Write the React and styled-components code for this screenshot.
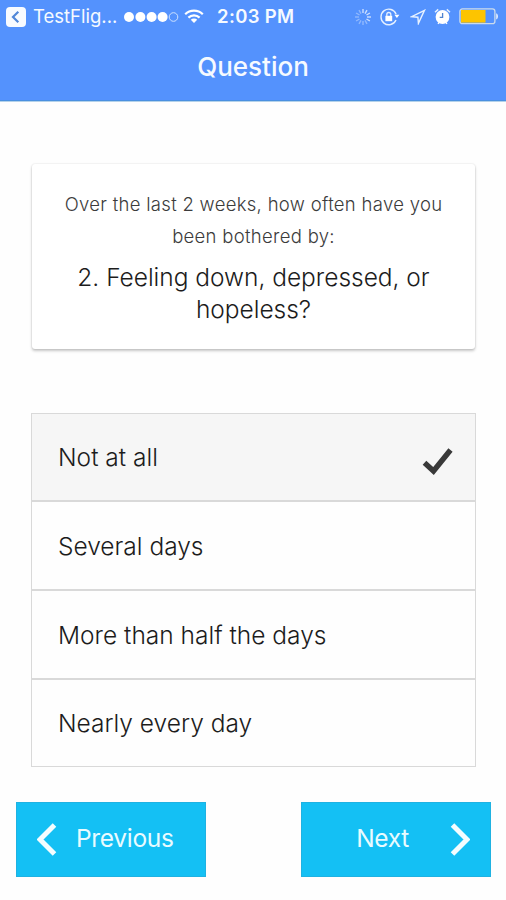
import React, { useState } from "react";
import styled, { createGlobalStyle } from "styled-components";

const GlobalStyle = createGlobalStyle`
  * { box-sizing: border-box; }
  body {
    margin: 0;
    background: #fefefe;
    font-family: Inter, "Liberation Sans", sans-serif;
  }
  button { font-family: inherit; }
`;

const Screen = styled.div`
  width: 506px;
  height: 900px;
  overflow: hidden;
  display: flex;
  flex-direction: column;
`;

const Header = styled.header`
  height: 102px;
  flex: none;
  background: #5492fd;
  border-bottom: 1px solid #b4d2ea;
  box-shadow: inset 0 -1px 0 #4a90e0;
  color: #f6faff;
`;

const StatusBar = styled.div`
  display: flex;
  align-items: center;
  height: 33px;
  padding-left: 6px;
`;

const StatusItem = styled.div`
  flex: none;
  width: ${(p) => p.$width}px;
  margin-right: ${(p) => p.$gap || 0}px;
  display: flex;
  align-items: center;
  white-space: nowrap;
  svg { display: block; }
`;

const StatusText = styled.span`
  margin-top: -1px;
  font-size: 18.5px;
  line-height: 24px;
  font-weight: ${(p) => (p.$strong ? 600 : 400)};
  letter-spacing: ${(p) => p.$spacing}px;
`;

const Title = styled.h1`
  margin: 16px 0 0;
  text-align: center;
  font-size: 26px;
  line-height: 36px;
  font-weight: 500;
  letter-spacing: 0;
`;

const QuestionCard = styled.section`
  margin: 62px 31px 0 32px;
  height: 185px;
  flex: none;
  padding-top: 24px;
  background: #fff;
  border-radius: 3px;
  box-shadow: 0 2px 3px rgba(0, 0, 0, 0.22), 0 0 2px rgba(0, 0, 0, 0.14);
  text-align: center;
`;

const Intro = styled.p`
  margin: 0 auto;
  width: 400px;
  color: #3c3c3c;
  font-size: 18.5px;
  line-height: 32px;
  font-weight: 300;
  letter-spacing: 0.3px;
`;

const Prompt = styled.h2`
  margin: 9px auto 0;
  width: 380px;
  color: #1c1c1c;
  font-size: 24.5px;
  line-height: 32px;
  font-weight: 300;
  letter-spacing: -0.02px;
`;

const Options = styled.div`
  margin: 64px 30px 0 31px;
  height: 354px;
  flex: none;
  display: grid;
  grid-template-rows: 88px 89px 89px 86px;
  border: 1px solid #d9d9d9;
`;

const Option = styled.button`
  display: flex;
  align-items: center;
  justify-content: space-between;
  padding: 0 22px 0 26px;
  border: 0;
  border-bottom: ${(p) => (p.$last ? "0" : "2px solid #d9d9d9")};
  background: ${(p) => (p.$selected ? "#f6f6f6" : "#fefefe")};
  color: #1c1c1c;
  font-size: 24.5px;
  font-weight: 300;
  text-align: left;
  letter-spacing: 0;
  svg { margin-top: 9px; }
`;

const Footer = styled.footer`
  display: flex;
  justify-content: space-between;
  padding: 35px 15px 0 16px;
`;

const NavButton = styled.button`
  width: 190px;
  height: 75px;
  display: flex;
  align-items: center;
  justify-content: ${(p) => (p.$next ? "flex-end" : "flex-start")};
  gap: ${(p) => (p.$next ? 41 : 19)}px;
  padding: 0 20px;
  border: 1px solid #1fb2e2;
  border-radius: 0;
  background: #14c0f4;
  color: #e9fbff;
  font-size: 24.5px;
  letter-spacing: -0.3px;
`;

const Label = styled.span`
  margin-top: -3px;
`;

const BackIcon = () => (
  <svg width="20" height="20" viewBox="0 0 20 20">
    <rect width="20" height="20" rx="4" fill="#f8fbff" />
    <path d="M12.3 4.8 7 10l5.3 5.2" fill="none" stroke="#5087d8" strokeWidth="2.2" />
  </svg>
);

const SignalIcon = () => (
  <svg width="55" height="12" viewBox="0 0 55 12" fill="#fff">
    {[5, 16.4, 27.6, 38.6].map((x) => (
      <circle key={x} cx={x} cy="6" r="5" />
    ))}
    <circle cx="49.5" cy="6" r="4.3" fill="none" stroke="#cfe2ff" strokeWidth="1" />
  </svg>
);

const WifiIcon = () => (
  <svg width="20" height="15" viewBox="0 0 20 15" fill="none" stroke="#fff" strokeWidth="2.2">
    <path d="M1.2 5.2a12.5 12.5 0 0 1 17.6 0" />
    <path d="M4.4 8.6a8 8 0 0 1 11.2 0" />
    <path d="M10 14 6.8 10.8a4.6 4.6 0 0 1 6.4 0z" fill="#fff" stroke="none" />
  </svg>
);

const SpinnerIcon = () => (
  <svg width="18" height="18" viewBox="-9 -9 18 18" stroke="#fff" strokeWidth="1.4">
    {Array.from({ length: 12 }, (_, i) => (
      <path key={i} d="M0-4V-8" transform={`rotate(${i * 30})`} opacity={i < 5 ? 0.7 : 0.35} />
    ))}
  </svg>
);

const RotationLockIcon = () => (
  <svg width="20" height="18" viewBox="0 0 20 18" fill="none" stroke="#e5f0ff">
    <path d="M16.1 6.2A7.8 7.8 0 1 0 16 12" strokeWidth="1.4" />
    <path d="M14.4 6.8h5L16.9 10z" fill="#fff" stroke="none" />
    <rect x="5.4" y="7.8" width="6.8" height="5.4" fill="#fff" stroke="none" />
    <path d="M6.8 8V6.5a2 2 0 0 1 4 0V8" strokeWidth="1.3" />
  </svg>
);

const LocationIcon = () => (
  <svg width="16" height="16" viewBox="0 0 16 16" fill="none" stroke="#e8f2ff" strokeWidth="1.4">
    <path d="M14.5 1.3 1.6 7.7 7.9 8.2 8.4 14.4z" />
  </svg>
);

const AlarmIcon = () => (
  <svg width="17" height="17" viewBox="0 0 17 17">
    <circle cx="8.5" cy="9" r="6.9" fill="#fff" />
    <path d="M1 4.3 4.2 1.4M16 4.3l-3.2-2.9" stroke="#e5f0ff" strokeWidth="1.5" />
    <path d="M4 15.8 5 14.5M13 15.8l-1-1.3" stroke="#fff" strokeWidth="1.3" />
    <path d="M8.6 5v4.3H5.7" fill="none" stroke="#5083d0" strokeWidth="1.3" />
  </svg>
);

const BatteryIcon = () => (
  <svg width="40" height="17" viewBox="0 0 40 17">
    <rect x="0.9" y="0.9" width="35" height="14.8" rx="2.5" fill="none" stroke="#cbdbec" strokeWidth="1.3" />
    <rect x="2" y="2" width="24.5" height="12.6" fill="#fdc400" />
    <path d="M37.2 5.2c2.4 1.2 2.4 5 0 6.2z" fill="#e2edff" />
  </svg>
);

const CheckIcon = () => (
  <svg width="32" height="30" viewBox="0 0 32 30">
    <path d="M3.5 15.8 12.5 24 29.5 3" fill="none" stroke="#393939" strokeWidth="5.4" />
  </svg>
);

const Chevron = ({ next }) => (
  <svg width="20" height="36" viewBox="0 0 20 36">
    <path
      d={next ? "M2.5 3 17 17.5 2.5 32" : "M17.5 3 3 17.5l14.5 14.5"}
      fill="none"
      stroke="#f4fdff"
      strokeWidth="5"
    />
  </svg>
);

const choices = ["Not at all", "Several days", "More than half the days", "Nearly every day"];

export default function App() {
  const [selected, setSelected] = useState(0);
  return (
    <>
      <GlobalStyle />
      <Screen>
        <Header>
          <StatusBar>
            <StatusItem $width={20} $gap={7}><BackIcon /></StatusItem>
            <StatusItem $width={83} $gap={8}><StatusText $spacing={0}>TestFlig...</StatusText></StatusItem>
            <StatusItem $width={55} $gap={5}><SignalIcon /></StatusItem>
            <StatusItem $width={20} $gap={13}><WifiIcon /></StatusItem>
            <StatusItem $width={78} $gap={59}><StatusText $strong $spacing={0.35}>2:03 PM</StatusText></StatusItem>
            <StatusItem $width={18} $gap={8}><SpinnerIcon /></StatusItem>
            <StatusItem $width={20} $gap={10}><RotationLockIcon /></StatusItem>
            <StatusItem $width={16} $gap={8}><LocationIcon /></StatusItem>
            <StatusItem $width={17} $gap={8}><AlarmIcon /></StatusItem>
            <StatusItem $width={40}><BatteryIcon /></StatusItem>
          </StatusBar>
          <Title>Question</Title>
        </Header>
        <QuestionCard>
          <Intro>Over the last 2 weeks, how often have you been bothered by:</Intro>
          <Prompt>2. Feeling down, depressed, or hopeless?</Prompt>
        </QuestionCard>
        <Options>
          {choices.map((choice, i) => (
            <Option
              key={choice}
              $selected={i === selected}
              $last={i === choices.length - 1}
              onClick={() => setSelected(i)}
            >
              {choice}
              {i === selected && <CheckIcon />}
            </Option>
          ))}
        </Options>
        <Footer>
          <NavButton><Chevron /><Label>Previous</Label></NavButton>
          <NavButton $next><Label>Next</Label><Chevron next /></NavButton>
        </Footer>
      </Screen>
    </>
  );
}
